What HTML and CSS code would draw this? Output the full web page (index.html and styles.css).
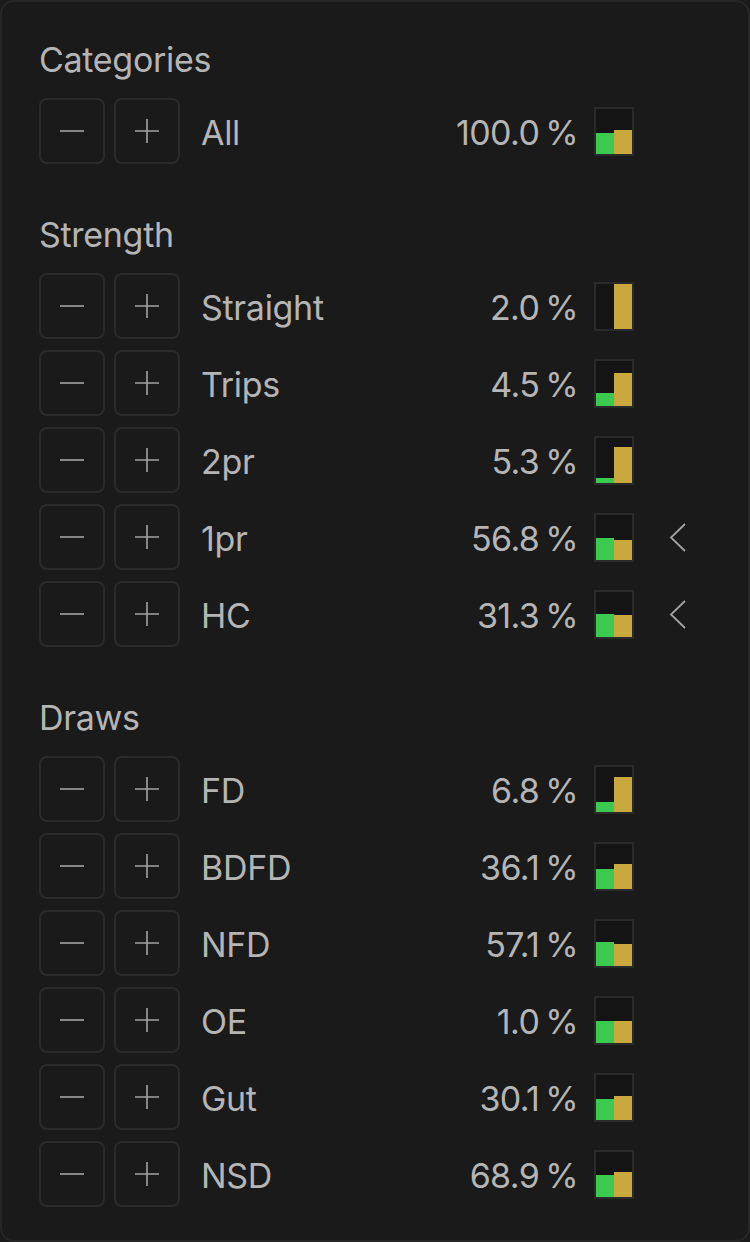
FILE: index.html
```html
<!DOCTYPE html>
<html lang="en">
<head>
  <meta charset="UTF-8" />
  <meta name="viewport" content="width=device-width, initial-scale=1.0" />
  <title>Categories</title>
  <link rel="stylesheet" href="styles.css">
</head>
<body>
  <div class="panel">
    <section class="group">
      <h2 class="heading">Categories</h2>
      <div class="row">
        <button class="btn"><svg viewBox="0 0 24 24"><path d="M0 12H24"/></svg></button>
        <button class="btn"><svg viewBox="0 0 24 24"><path d="M0 12H24M12 0V24"/></svg></button>
        <span class="label">All</span>
        <span class="pct">100.0 %</span>
        <div class="chart"><i class="bar green" style="height:21px"></i><i class="bar gold" style="height:24px"></i></div>
        <span class="more"></span>
      </div>
    </section>

    <section class="group">
      <h2 class="heading">Strength</h2>
      <div class="row">
        <button class="btn"><svg viewBox="0 0 24 24"><path d="M0 12H24"/></svg></button>
        <button class="btn"><svg viewBox="0 0 24 24"><path d="M0 12H24M12 0V24"/></svg></button>
        <span class="label">Straight</span>
        <span class="pct">2.0 %</span>
        <div class="chart"><i class="bar green" style="height:0px"></i><i class="bar gold" style="height:45px"></i></div>
        <span class="more"></span>
      </div>
      <div class="row">
        <button class="btn"><svg viewBox="0 0 24 24"><path d="M0 12H24"/></svg></button>
        <button class="btn"><svg viewBox="0 0 24 24"><path d="M0 12H24M12 0V24"/></svg></button>
        <span class="label">Trips</span>
        <span class="pct">4.5 %</span>
        <div class="chart"><i class="bar green" style="height:13px"></i><i class="bar gold" style="height:33px"></i></div>
        <span class="more"></span>
      </div>
      <div class="row">
        <button class="btn"><svg viewBox="0 0 24 24"><path d="M0 12H24"/></svg></button>
        <button class="btn"><svg viewBox="0 0 24 24"><path d="M0 12H24M12 0V24"/></svg></button>
        <span class="label">2pr</span>
        <span class="pct">5.3 %</span>
        <div class="chart"><i class="bar green" style="height:5px"></i><i class="bar gold" style="height:36px"></i></div>
        <span class="more"></span>
      </div>
      <div class="row">
        <button class="btn"><svg viewBox="0 0 24 24"><path d="M0 12H24"/></svg></button>
        <button class="btn"><svg viewBox="0 0 24 24"><path d="M0 12H24M12 0V24"/></svg></button>
        <span class="label">1pr</span>
        <span class="pct">56.8 %</span>
        <div class="chart"><i class="bar green" style="height:22px"></i><i class="bar gold" style="height:20px"></i></div>
        <span class="more"><svg viewBox="0 0 17 29"><path d="M16 1L2 14.5L16 28"/></svg></span>
      </div>
      <div class="row">
        <button class="btn"><svg viewBox="0 0 24 24"><path d="M0 12H24"/></svg></button>
        <button class="btn"><svg viewBox="0 0 24 24"><path d="M0 12H24M12 0V24"/></svg></button>
        <span class="label">HC</span>
        <span class="pct">31.3 %</span>
        <div class="chart"><i class="bar green" style="height:23px"></i><i class="bar gold" style="height:22px"></i></div>
        <span class="more"><svg viewBox="0 0 17 29"><path d="M16 1L2 14.5L16 28"/></svg></span>
      </div>
    </section>

    <section class="group">
      <h2 class="heading">Draws</h2>
      <div class="row">
        <button class="btn"><svg viewBox="0 0 24 24"><path d="M0 12H24"/></svg></button>
        <button class="btn"><svg viewBox="0 0 24 24"><path d="M0 12H24M12 0V24"/></svg></button>
        <span class="label">FD</span>
        <span class="pct">6.8 %</span>
        <div class="chart"><i class="bar green" style="height:10px"></i><i class="bar gold" style="height:35px"></i></div>
        <span class="more"></span>
      </div>
      <div class="row">
        <button class="btn"><svg viewBox="0 0 24 24"><path d="M0 12H24"/></svg></button>
        <button class="btn"><svg viewBox="0 0 24 24"><path d="M0 12H24M12 0V24"/></svg></button>
        <span class="label">BDFD</span>
        <span class="pct">36.1 %</span>
        <div class="chart"><i class="bar green" style="height:20px"></i><i class="bar gold" style="height:25px"></i></div>
        <span class="more"></span>
      </div>
      <div class="row">
        <button class="btn"><svg viewBox="0 0 24 24"><path d="M0 12H24"/></svg></button>
        <button class="btn"><svg viewBox="0 0 24 24"><path d="M0 12H24M12 0V24"/></svg></button>
        <span class="label">NFD</span>
        <span class="pct">57.1 %</span>
        <div class="chart"><i class="bar green" style="height:24px"></i><i class="bar gold" style="height:22px"></i></div>
        <span class="more"></span>
      </div>
      <div class="row">
        <button class="btn"><svg viewBox="0 0 24 24"><path d="M0 12H24"/></svg></button>
        <button class="btn"><svg viewBox="0 0 24 24"><path d="M0 12H24M12 0V24"/></svg></button>
        <span class="label">OE</span>
        <span class="pct">1.0 %</span>
        <div class="chart"><i class="bar green" style="height:22px"></i><i class="bar gold" style="height:22px"></i></div>
        <span class="more"></span>
      </div>
      <div class="row">
        <button class="btn"><svg viewBox="0 0 24 24"><path d="M0 12H24"/></svg></button>
        <button class="btn"><svg viewBox="0 0 24 24"><path d="M0 12H24M12 0V24"/></svg></button>
        <span class="label">Gut</span>
        <span class="pct">30.1 %</span>
        <div class="chart"><i class="bar green" style="height:21px"></i><i class="bar gold" style="height:24px"></i></div>
        <span class="more"></span>
      </div>
      <div class="row">
        <button class="btn"><svg viewBox="0 0 24 24"><path d="M0 12H24"/></svg></button>
        <button class="btn"><svg viewBox="0 0 24 24"><path d="M0 12H24M12 0V24"/></svg></button>
        <span class="label">NSD</span>
        <span class="pct">68.9 %</span>
        <div class="chart"><i class="bar green" style="height:22px"></i><i class="bar gold" style="height:25px"></i></div>
        <span class="more"></span>
      </div>
    </section>
  </div>
</body>
</html>
```

FILE: styles.css
```css
:root {
  --bg: #1a1a1a;
  --line: #2a2a2a;
  --text: #b5b5b5;
  --icon: #a3a3a3;
  --green: #3cc94f;
  --gold: #c9a83d;
}

* {
  margin: 0;
  padding: 0;
  box-sizing: border-box;
}

html, body {
  height: 100%;
}

body {
  background: var(--bg);
  font-family: 'Inter', sans-serif;
  color: var(--text);
}

.panel {
  height: 1242px;
  border: 2px solid #262626;
  border-radius: 14px;
  background: var(--bg);
  padding: 36px 62px 0 37px;
}

.group + .group {
  margin-top: 49px;
}

.heading {
  font-size: 34px;
  font-weight: 400;
  letter-spacing: -0.3px;
  line-height: 40px;
  padding-top: 2px;
  margin-bottom: 18px;
}

.row {
  display: flex;
  align-items: center;
  height: 66px;
}

.row + .row {
  margin-top: 11px;
}

.btn {
  width: 66px;
  height: 66px;
  border: 2px solid var(--line);
  border-radius: 8px;
  background: transparent;
  display: flex;
  align-items: center;
  justify-content: center;
}

.btn + .btn {
  margin-left: 9px;
}

.btn svg {
  width: 24px;
  height: 24px;
  fill: none;
  stroke: var(--icon);
  stroke-width: 1.6;
}

.label {
  flex: 1;
  margin-left: 21px;
  font-size: 34px;
  letter-spacing: -0.3px;
  padding-top: 2px;
}

.pct {
  font-size: 34px;
  letter-spacing: -0.6px;
  word-spacing: -3px;
  padding-top: 2px;
}

.chart {
  margin-left: 16px;
  width: 40px;
  height: 49px;
  border: 2px solid var(--line);
  background: #141414;
  display: flex;
  align-items: flex-end;
}

.bar {
  display: block;
  width: 18px;
}

.green {
  background: var(--green);
}

.gold {
  background: var(--gold);
}

.more {
  margin-left: 35px;
  width: 17px;
  height: 29px;
}

.more svg {
  width: 17px;
  height: 29px;
  fill: none;
  stroke: var(--icon);
  stroke-width: 1.8;
}
```
